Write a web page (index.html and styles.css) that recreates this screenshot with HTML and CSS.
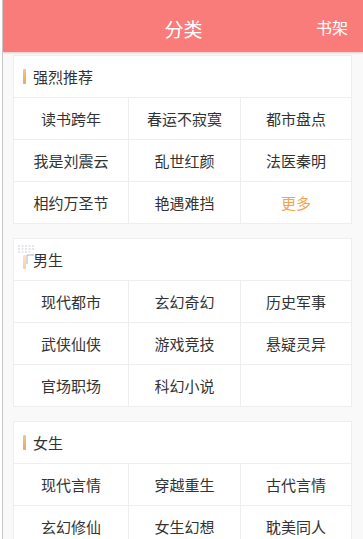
FILE: index.html
```html
<!DOCTYPE html>
<html lang="zh-CN">
<head>
<meta charset="utf-8">
<title>分类</title>
<link rel="stylesheet" href="styles.css">
</head>
<body>
<div class="page">
  <header class="header">
    <div class="header-title">分类</div>
    <div class="header-right">书架</div>
  </header>

  <section class="card">
    <div class="card-title"><span class="bar"></span>强烈推荐</div>
    <div class="grid">
      <div class="cell">读书跨年</div>
      <div class="cell">春运不寂寞</div>
      <div class="cell">都市盘点</div>
      <div class="cell">我是刘震云</div>
      <div class="cell">乱世红颜</div>
      <div class="cell">法医秦明</div>
      <div class="cell">相约万圣节</div>
      <div class="cell">艳遇难挡</div>
      <div class="cell more">更多</div>
    </div>
  </section>

  <section class="card">
    <div class="card-title has-handle">
      <svg class="handle" width="18" height="22" viewBox="0 0 18 22">
        <g stroke="#c9ced6" stroke-width="1.2" stroke-dasharray="2 1.5">
          <line x1="1" y1="2" x2="17" y2="2"/>
          <line x1="1" y1="5" x2="17" y2="5"/>
          <line x1="1" y1="8" x2="13" y2="8"/>
        </g>
        <line x1="10" y1="11" x2="17" y2="11" stroke="#b9bec6" stroke-width="1.2"/>
        <line x1="10" y1="11" x2="10" y2="20" stroke="#b9bec6" stroke-width="1.2"/>
      </svg>
      <span class="bar faded"></span>男生</div>
    <div class="grid">
      <div class="cell">现代都市</div>
      <div class="cell">玄幻奇幻</div>
      <div class="cell">历史军事</div>
      <div class="cell">武侠仙侠</div>
      <div class="cell">游戏竞技</div>
      <div class="cell">悬疑灵异</div>
      <div class="cell">官场职场</div>
      <div class="cell">科幻小说</div>
      <div class="cell"></div>
    </div>
  </section>

  <section class="card">
    <div class="card-title"><span class="bar"></span>女生</div>
    <div class="grid">
      <div class="cell">现代言情</div>
      <div class="cell">穿越重生</div>
      <div class="cell">古代言情</div>
      <div class="cell">玄幻修仙</div>
      <div class="cell">女生幻想</div>
      <div class="cell">耽美同人</div>
    </div>
  </section>
</div>
</body>
</html>
```

FILE: styles.css
```css
html, body {
  margin: 0;
  padding: 0;
}
body {
  background: #ffffff;
  font-family: "Noto Sans CJK SC", "Noto Sans", sans-serif;
  color: #333333;
  overflow: hidden;
}
.page {
  margin-left: 2px;
  border-left: 1px solid #c6c6c6;
  min-height: 539px;
  background: #f9f9f9;
  overflow: hidden;
}
.header {
  height: 52px;
  background: #fa7c7a;
  display: flex;
  align-items: center;
  justify-content: center;
  position: relative;
  color: #ffffff;
  box-shadow: 0 1px 2px rgba(200, 90, 90, 0.35);
}
.header-title {
  font-size: 19px;
  line-height: 1;
  margin-left: 1px;
  padding-top: 4px;
}
.header-right {
  position: absolute;
  right: 15px;
  top: 19px;
  font-size: 16px;
  line-height: 1;
}
.card {
  margin: 0 11px 14px 10px;
  background: #ffffff;
  border: 1px solid #eeeeee;
}
.card:first-of-type {
  margin-top: 3px;
}
.card-title {
  height: 41px;
  display: flex;
  align-items: center;
  padding-left: 9px;
  font-size: 15px;
  border-bottom: 1px solid #eeeeee;
  position: relative;
}
.bar {
  width: 3px;
  height: 15px;
  border-radius: 1px;
  background: linear-gradient(#f3c48c, #e8a862);
  margin-right: 7px;
}
.bar.faded {
  background: linear-gradient(#fbe4cc, #f5cfa8);
  height: 14px;
  margin-top: 4px;
}
.handle {
  position: absolute;
  left: 3px;
  top: 5px;
}
.grid {
  display: grid;
  grid-template-columns: 114px 111px 1fr;
  gap: 1px;
  background: #eeeeee;
}
.cell {
  height: 41px;
  background: #ffffff;
  display: flex;
  align-items: center;
  justify-content: center;
  font-size: 15px;
  color: #333333;
}
.cell.more {
  color: #f5a34e;
}
```
